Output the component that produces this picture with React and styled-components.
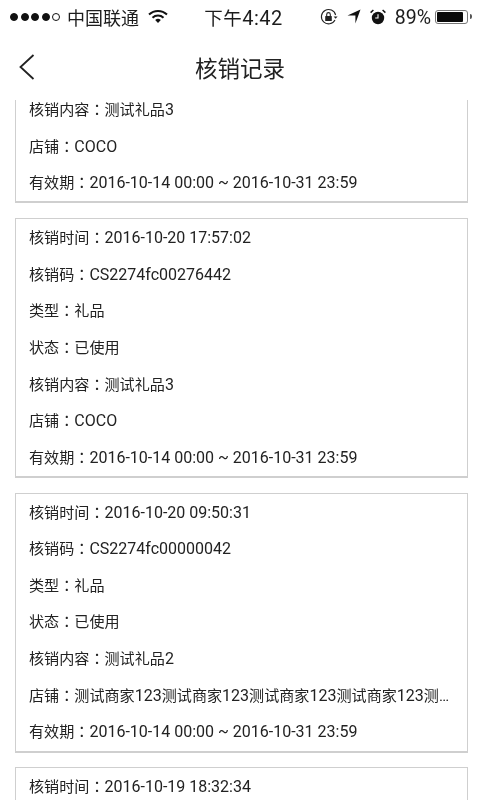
import React from "react";
import styled, {createGlobalStyle} from "styled-components";

const GlobalStyle = createGlobalStyle`
  html, body {
    margin: 0;
    padding: 0;
    background: #fff;
  }
  * {
    box-sizing: border-box;
  }
`

const Page = styled.div`
  width: 480px;
  height: 800px;
  display: flex;
  flex-direction: column;
  overflow: hidden;
  background: #fff;
  color: #222;
  font-family: Roboto, "Noto Sans CJK SC", sans-serif;
  filter: blur(0.3px);
`

const StatusBar = styled.div`
  height: 33px;
  flex: none;
  display: grid;
  grid-template-columns: 1fr auto 1fr;
  align-items: center;
  padding: 0 12px 0 10px;
  color: #1c1c1c;
`

const StatusLeft = styled.div`
  display: flex;
  align-items: center;
  gap: 7px;

  svg {
    margin-left: 2px;
  }
`

const StatusRight = styled.div`
  display: flex;
  align-items: center;
  justify-content: flex-end;
  gap: 9px;
`

const Signal = styled.div`
  display: flex;
  gap: 2.5px;
`

const Dot = styled.span`
  width: 8px;
  height: 8px;
  border-radius: 50%;
  border: 1px solid #111;
  background: ${props => (props.$on ? "#111" : "transparent")};
`

const Carrier = styled.span`
  font-size: 18px;
`

const Clock = styled.span`
  font-size: 18.5px;
  letter-spacing: 0.5px;
  padding-left: 9px;

  b {
    font-weight: 400;
    font-size: 20px;
  }
`

const Percent = styled.span`
  font-size: 19.5px;
  line-height: 22px;
  padding-top: 2px;
  margin-right: -5px;
`

const Battery = styled.div`
  width: 33px;
  height: 14px;
  border: 1.5px solid #777;
  border-radius: 3px;
  padding: 1px;
  position: relative;

  span {
    display: block;
    width: 90%;
    height: 100%;
    background: #0a0a0a;
    border-radius: 1px;
  }

  &:after {
    content: "";
    position: absolute;
    right: -5px;
    top: 3px;
    width: 2px;
    height: 5px;
    background: #555;
    border-radius: 0 2px 2px 0;
  }
`

const NavBar = styled.div`
  height: 67px;
  margin-bottom: -4px;
  flex: none;
  display: flex;
  align-items: center;
  justify-content: center;
  position: relative;
  z-index: 1;
  background: #fff;
`

const BackButton = styled.button`
  position: absolute;
  left: 18px;
  top: 20px;
  width: 18px;
  height: 28px;
  padding: 0;
  border: 0;
  background: none;
  display: flex;
`

const Title = styled.h1`
  margin: 0;
  font-size: 22.5px;
  font-weight: 400;
  color: #222;
`

const List = styled.div`
  flex: 1;
  min-height: 0;
  overflow: hidden;
  padding: 0 12px 0 15px;
  display: flex;
  flex-direction: column;
  gap: 14.6px;
`

// the first card is scrolled under the nav bar, so it shows no top edge
const Card = styled.div`
  flex: none;
  height: ${props => (props.$scrolled ? "auto" : "260px")};
  padding: ${props => (props.$scrolled ? "1px 13px 9px" : "6px 13px 7px")};
  border: 1px solid #cfcfcf;
  border-top-width: ${props => (props.$scrolled ? "0" : "1px")};
  border-bottom-width: 2px;
  display: flex;
  flex-direction: column;
  gap: 14.67px;
`

const Row = styled.div`
  flex: none;
  height: 22px;
  font-size: 15.1px;
  line-height: 22px;
  color: #222;
  white-space: nowrap;
  overflow: hidden;
  text-overflow: ellipsis;
`

const Latin = styled.span`
  font-size: 16px;
`

// the traditional cut of the font has the colon in the middle of its square
const Colon = styled.span`
  font-family: "Noto Sans CJK TC", sans-serif;
`

const shop = "测试商家123测试商家123测试商家123测试商家123测试商家123";
const period = "2016-10-14 00:00 ~ 2016-10-31 23:59";

const records = [
    {
        scrolled: true,
        rows: [["核销内容", "测试礼品3"], ["店铺", "COCO"], ["有效期", period]],
    },
    {
        rows: [
            ["核销时间", "2016-10-20 17:57:02"],
            ["核销码", "CS2274fc00276442"],
            ["类型", "礼品"],
            ["状态", "已使用"],
            ["核销内容", "测试礼品3"],
            ["店铺", "COCO"],
            ["有效期", period],
        ],
    },
    {
        rows: [
            ["核销时间", "2016-10-20 09:50:31"],
            ["核销码", "CS2274fc00000042"],
            ["类型", "礼品"],
            ["状态", "已使用"],
            ["核销内容", "测试礼品2"],
            ["店铺", shop],
            ["有效期", period],
        ],
    },
    {
        rows: [["核销时间", "2016-10-19 18:32:34"]],
    },
];

const Wifi = () => (
    <svg width="20" height="15" viewBox="0 0 20 15">
        <path d="M1 5.5a13 13 0 0 1 18 0" fill="none" stroke="#111" strokeWidth="2"/>
        <path d="M4.5 8.7a8 8 0 0 1 11 0" fill="none" stroke="#111" strokeWidth="2"/>
        <path d="M10 14l-2.8-3a4 4 0 0 1 5.6 0z" fill="#111"/>
    </svg>
);

const RotationLock = () => (
    <svg width="18" height="18" viewBox="0 0 18 18">
        <path d="M15 12a7.2 7.2 0 1 1 .6-5" fill="none" stroke="#222" strokeWidth="1.1"/>
        <path d="M13.6 8.6h4l-2 2.2z" fill="#222"/>
        <rect x="5.2" y="8" width="6.6" height="5" rx="0.6" fill="#222"/>
        <path d="M6.7 8V6.4a1.8 1.8 0 0 1 3.6 0V8" fill="none" stroke="#222" strokeWidth="1.1"/>
    </svg>
);

const Location = () => (
    <svg width="14" height="15" viewBox="0 0 14 15">
        <path d="M13.5 0.5L8.4 14.5V6.6H0.5z" fill="#111"/>
    </svg>
);

const Alarm = () => (
    <svg width="16" height="16" viewBox="0 0 16 16">
        <circle cx="8" cy="9" r="6.2" fill="#111"/>
        <path d="M8 5.2V9H5.2" fill="none" stroke="#fff" strokeWidth="1.1"/>
        <path d="M0.6 3.6L3.4 1M15.4 3.6L12.6 1" fill="none" stroke="#111" strokeWidth="1.5"/>
    </svg>
);

// digits and latin letters are a little larger than the chinese around them
const Mixed = ({text}) => text.split(/([\x20-\x7e]+)/).map((part, i) => (
    i % 2 ? <Latin key={i}>{part}</Latin> : part
));

const Field = ({label, value}) => (
    <Row>{label}<Colon>：</Colon><Mixed text={value}/></Row>
);

const App = () => {
    return (
        <Page>
            <GlobalStyle/>
            <StatusBar>
                <StatusLeft>
                    <Signal>
                        <Dot $on/>
                        <Dot $on/>
                        <Dot $on/>
                        <Dot $on/>
                        <Dot/>
                    </Signal>
                    <Carrier>中国联通</Carrier>
                    <Wifi/>
                </StatusLeft>
                <Clock>下午<b>4:42</b></Clock>
                <StatusRight>
                    <RotationLock/>
                    <Location/>
                    <Alarm/>
                    <Percent>89%</Percent>
                    <Battery><span/></Battery>
                </StatusRight>
            </StatusBar>
            <NavBar>
                <BackButton aria-label="返回">
                    <svg width="18" height="28" viewBox="0 0 18 28">
                        <path d="M15.5 2L2.5 14l13 12" fill="none" stroke="#222" strokeWidth="1.8"/>
                    </svg>
                </BackButton>
                <Title>核销记录</Title>
            </NavBar>
            <List>
                {records.map((item, i) => (
                    <Card key={i} $scrolled={item.scrolled}>
                        {item.rows.map(([label, value]) => (
                            <Field key={label} label={label} value={value}/>
                        ))}
                    </Card>
                ))}
            </List>
        </Page>
    );
};

export default App;
